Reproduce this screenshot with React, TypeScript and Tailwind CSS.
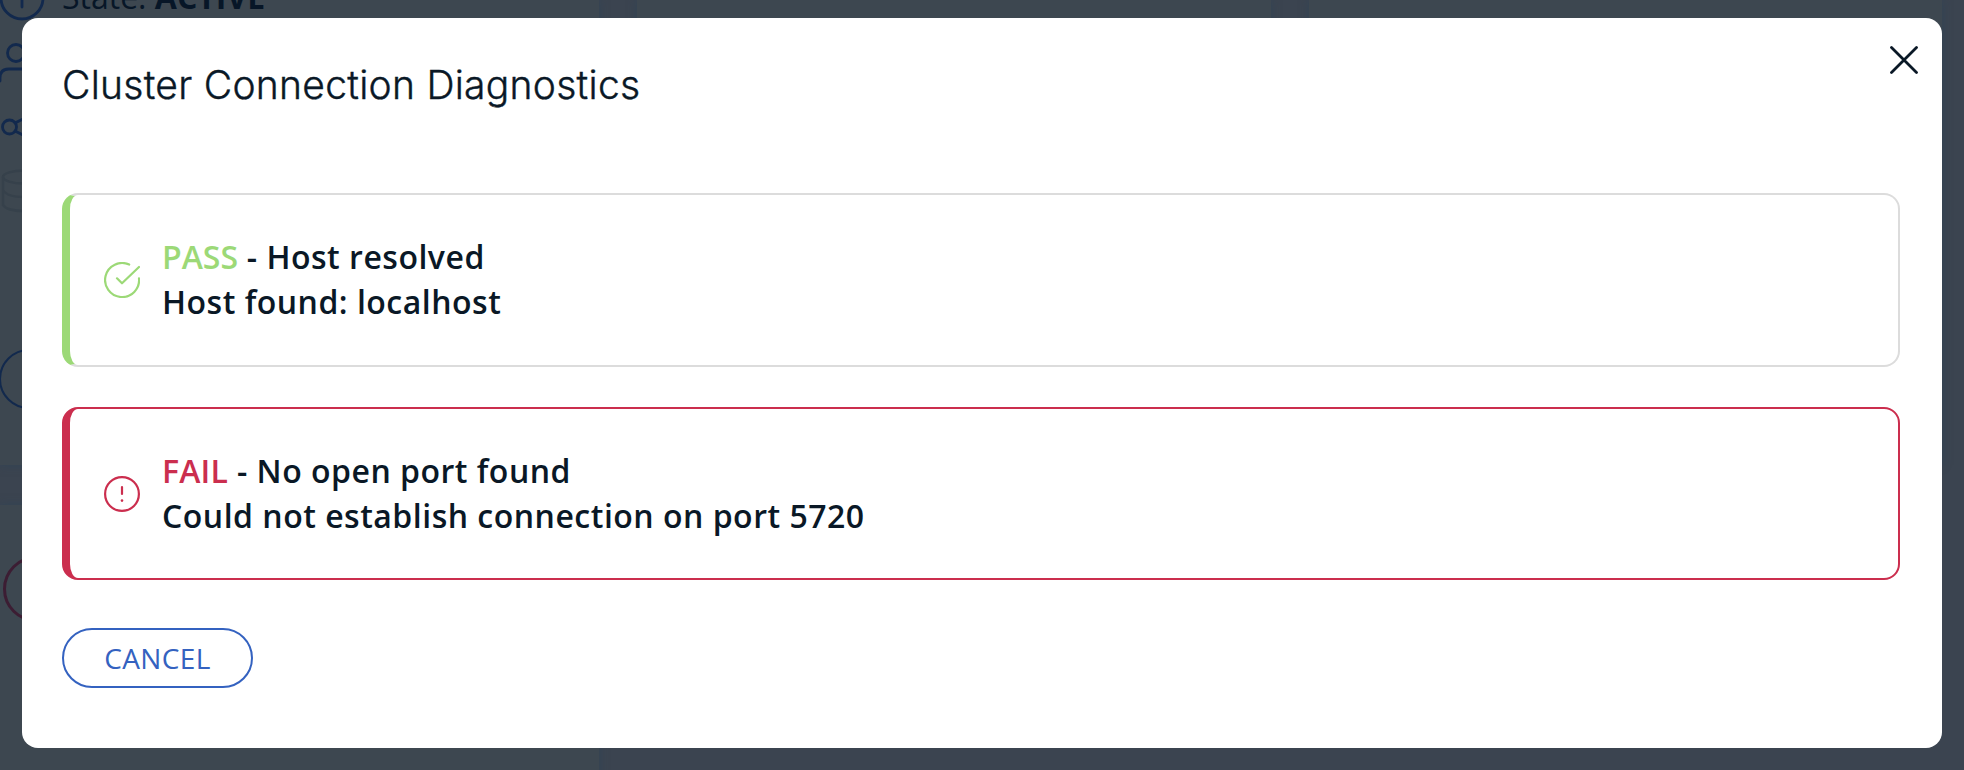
import React from 'react';

const cardShadow = 'shadow-[0_0_8px_rgba(48,68,86,0.8)]';

function Backdrop() {
  return (
    <div className="flex h-full gap-[38px] overflow-hidden bg-[#3b4450]">
      <div className="flex h-full w-[599px] shrink-0 flex-col gap-10 text-[#12294d]">
        <section className={`relative h-[465px] w-full shrink-0 bg-[#3d4750] ${cardShadow}`}>
          <svg className="absolute left-0 top-0" width="240" height="465" viewBox="0 0 240 465" fill="none" stroke="#12294d" strokeWidth="2.8" strokeLinecap="round">
            <circle cx="22" cy="-2" r="21" />
            <path d="M22 -6V7" />
            <circle cx="16" cy="53" r="8.5" />
            <path d="M0 81v-3q0-9 9-9h16" />
            <circle cx="9.500" cy="127" r="7" />
            <path d="M15 123l10-5M15 131l10 5" />
            <g stroke="#36414b" strokeWidth="2.4">
              <ellipse cx="24" cy="177" rx="21" ry="6.500" />
              <path d="M3 177v28q4 6 21 6M3 190q4 7 21 7" />
            </g>
            <circle cx="29" cy="379" r="29" strokeWidth="2" />
          </svg>
          <p className="-mt-[25px] pl-[62px] font-['Open_Sans'] text-[32px] leading-[44px] text-[#071627]">
            State: <b>ACTIVE</b>
          </p>
        </section>
        <section className={`h-[300px] w-full shrink-0 bg-[#3d4750] ${cardShadow}`}>
          <svg width="60" height="200" viewBox="0 0 60 200" fill="none" stroke="#3c1d33" strokeWidth="3">
            <circle cx="36" cy="84" r="31.500" />
          </svg>
        </section>
      </div>
      <section className={`h-[465px] w-[634px] shrink-0 bg-[#3d4750] ${cardShadow}`} />
      <section className={`h-[465px] w-[633px] shrink-0 bg-[#3d4750] ${cardShadow}`} />
    </div>
  );
}

function PassIcon() {
  return (
    <svg width="36" height="36" viewBox="0 0 36 36" fill="none" stroke="#9cd977" strokeWidth="2.2" strokeLinecap="round" strokeLinejoin="round">
      <path d="M25.200 2.600A17 17 0 1 0 35 16.300" />
      <path d="M13 16.300L18 21.300L35 5" />
    </svg>
  );
}

function FailIcon() {
  return (
    <svg width="36" height="36" viewBox="0 0 36 36" fill="none" stroke="#cb2e4e" strokeWidth="2.2" strokeLinecap="round">
      <circle cx="18" cy="18" r="16.900" />
      <path d="M18 11v7" />
      <path d="M18 24.500v.1" strokeWidth="2.600" />
    </svg>
  );
}

export default function App() {
  return (
    <div className="relative h-[770px] w-[1964px] overflow-hidden">
      <Backdrop />
      <div role="dialog" className="absolute left-[22px] top-[18px] flex h-[730px] w-[1920px] flex-col rounded-2xl bg-white pl-10 pr-[42px] text-[#0a1826]">
        <header className="flex h-[175px] items-start justify-between">
          <h1 className="mt-[42px] whitespace-nowrap font-['Inter'] text-[39px] font-light leading-[50px] tracking-[0.28px] [-webkit-text-stroke:0.4px_#0a1826]">
            Cluster Connection Diagnostics
          </h1>
          <button className="-mr-[18px] mt-7" aria-label="Close">
            <svg width="28" height="28" viewBox="0 0 28 28" fill="none" stroke="#0a1826" strokeWidth="2.800" strokeLinecap="round">
              <path d="M1.500 1.500L26.500 26.500M26.500 1.500L1.500 26.500" />
            </svg>
          </button>
        </header>
        <div className="flex flex-col gap-10 font-['Open_Sans'] text-[32px] font-semibold leading-[44.600px] tracking-[0.5px]">
          <div className="flex h-[174px] items-center gap-[22px] rounded-2xl border-2 border-l-8 border-[#dcdcdc] border-l-[#9cd977] pl-[34px]">
            <PassIcon />
            <div>
              <p><span className="text-[#9cd977] tracking-[0px]">PASS</span> - Host resolved</p>
              <p>Host found: localhost</p>
            </div>
          </div>
          <div className="flex h-[173px] items-center gap-[22px] rounded-2xl border-2 border-l-8 border-[#cb2e4e] pl-[34px]">
            <FailIcon />
            <div>
              <p><span className="tracking-[0.2px] text-[#cb2e4e]">FAIL</span> - No open port found</p>
              <p>Could not establish connection on port 5720</p>
            </div>
          </div>
        </div>
        <button className="mt-12 h-[60px] w-[191px] rounded-full border-2 border-[#3462c0] font-['Open_Sans'] text-[28px] leading-none tracking-[0.4px] text-[#3462c0]">
          CANCEL
        </button>
      </div>
    </div>
  );
}
